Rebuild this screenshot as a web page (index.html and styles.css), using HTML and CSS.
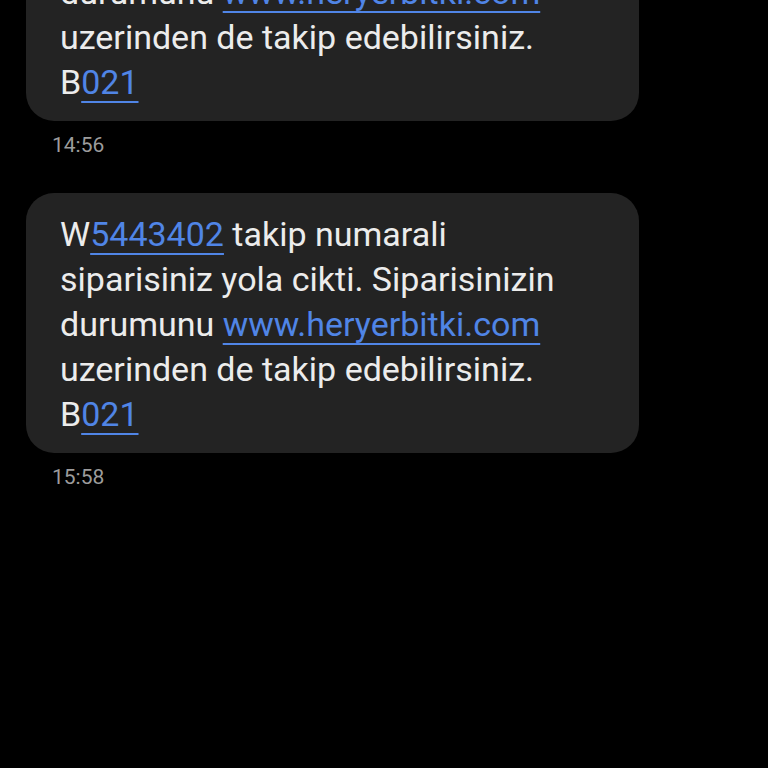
FILE: index.html
```html
<!DOCTYPE html>
<html lang="tr">
<head>
  <meta charset="UTF-8" />
  <meta name="viewport" content="width=device-width, initial-scale=1.0"/>
  <title>Mesajlar</title>
  <link rel="stylesheet" href="styles.css">
</head>
<body>
  <div class="thread">
    <div class="msg">
      <div class="bubble">
        W<a href="#">5443402</a> takip numarali<br>
        siparisiniz yola cikti. Siparisinizin<br>
        durumunu <a href="#">www.heryerbitki.com</a><br>
        uzerinden de takip edebilirsiniz.<br>
        B<a href="#">021</a>
      </div>
      <div class="time">14:56</div>
    </div>

    <div class="msg">
      <div class="bubble">
        W<a href="#">5443402</a> takip numarali<br>
        siparisiniz yola cikti. Siparisinizin<br>
        durumunu <a href="#">www.heryerbitki.com</a><br>
        uzerinden de takip edebilirsiniz.<br>
        B<a href="#">021</a>
      </div>
      <div class="time">15:58</div>
    </div>
  </div>
</body>
</html>
```

FILE: styles.css
```css
html, body {
  background: #000;
}
body {
  margin: 0;
  font-family: Roboto, 'Noto Sans', sans-serif;
  color: #ececec;
  overflow: hidden;
}
.thread {
  margin-top: -139px;
  padding: 0 129px 0 26px;
}
.msg {
  margin-bottom: 36px;
}
.bubble {
  background: #232323;
  border-radius: 28px;
  padding: 19px 20px 16px 34px;
  font-size: 34px;
  line-height: 45px;
  white-space: nowrap;
}
.bubble a {
  color: #5085e6;
  text-decoration: underline;
  text-decoration-thickness: 2px;
  text-underline-offset: 7px;
}
.time {
  margin-top: 12px;
  padding-left: 26px;
  font-size: 21px;
  line-height: 24px;
  color: #9c9c9c;
}
```
